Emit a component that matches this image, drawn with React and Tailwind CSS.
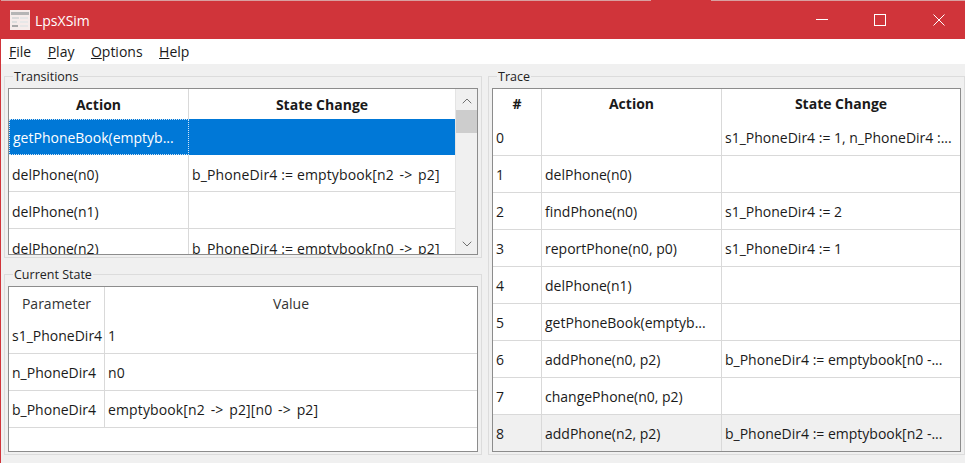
import { ChevronUp, ChevronDown } from "lucide-react";

const transitions = [
  ["getPhoneBook(emptyb...", ""],
  ["delPhone(n0)", "b_PhoneDir4 := emptybook[n2 -> p2]"],
  ["delPhone(n1)", ""],
  ["delPhone(n2)", "b_PhoneDir4 := emptybook[n0 -> p2]"],
];

const params = [
  ["s1_PhoneDir4", "1"],
  ["n_PhoneDir4", "n0"],
  ["b_PhoneDir4", "emptybook[n2 -> p2][n0 -> p2]"],
];

const trace = [
  ["0", "", "s1_PhoneDir4 := 1, n_PhoneDir4 :..."],
  ["1", "delPhone(n0)", ""],
  ["2", "findPhone(n0)", "s1_PhoneDir4 := 2"],
  ["3", "reportPhone(n0, p0)", "s1_PhoneDir4 := 1"],
  ["4", "delPhone(n1)", ""],
  ["5", "getPhoneBook(emptyb...", ""],
  ["6", "addPhone(n0, p2)", "b_PhoneDir4 := emptybook[n0 -..."],
  ["7", "changePhone(n0, p2)", ""],
  ["8", "addPhone(n2, p2)", "b_PhoneDir4 := emptybook[n2 -..."],
];

function AppIcon() {
  return (
    <svg width="20" height="20" viewBox="0 0 20 20" className="shrink-0">
      <rect width="20" height="20" fill="#f6ecea" />
      <rect x="1" y="2" width="18" height="3" fill="#b5b5b5" />
      <rect x="2" y="7" width="7" height="2" fill="#d9d9d9" />
      <rect x="10" y="7" width="8" height="2" fill="#e6e6e6" />
      <rect x="2" y="11" width="5" height="2" fill="#dddddd" />
      <rect x="10" y="11" width="8" height="2" fill="#e8e8e8" />
      <rect x="2" y="15" width="6" height="2" fill="#a8a8a8" />
      <rect x="10" y="15" width="8" height="2" fill="#e6e6e6" />
    </svg>
  );
}

function GroupBox({ title, className, children }) {
  return (
    <div className={`relative border border-[#dcdcdc] px-[3px] pt-[11px] pb-[2px] flex flex-col ${className}`}>
      <span className="absolute left-[8px] top-[-8px] bg-[#f0f0f0] px-[1px] text-[12.5px] leading-[15px] text-[#222]">
        {title}
      </span>
      {children}
    </div>
  );
}

// the arrow sits wider in the original font
function Value({ text }) {
  const parts = text.split(" -> ");
  return (
    <span className="tracking-[0.13px]">
      {parts.map((part, i) => (
        <span key={i}>
          {i > 0 && <span className="mx-[2px]"> -&gt; </span>}
          {part}
        </span>
      ))}
    </span>
  );
}

export default function App() {
  return (
    <div className="h-[463px] w-[965px] overflow-hidden bg-[#f0f0f0] text-[14px] text-[#1a1a1a] font-['Open_Sans','Noto_Sans',sans-serif] border-l border-[#d0343a]">
      {/* Title bar */}
      <div className="relative h-[39px] bg-[#d0343a] flex items-center text-white border-t border-[#d8a0a0]">
        <div className="absolute left-[650px] top-[-1px] h-[1px] w-[60px] bg-[#d0343a]" />
        <div className="ml-[9px]">
          <AppIcon />
        </div>
        <span className="ml-[5px] text-[14px]">LpsXSim</span>
        <div className="ml-auto flex items-center">
          <svg width="12" height="12" viewBox="0 0 12 12" className="mr-[46px]" stroke="white" fill="none">
            <path d="M0 5.5H12" />
          </svg>
          <svg width="12" height="12" viewBox="0 0 12 12" className="mr-[47px]" stroke="white" fill="none">
            <rect x="0.5" y="0.5" width="11" height="11" />
          </svg>
          <svg width="12" height="12" viewBox="0 0 12 12" className="mr-[20px]" stroke="white" fill="none">
            <path d="M0.5 0.5L11.5 11.5M11.5 0.5L0.5 11.5" />
          </svg>
        </div>
      </div>

      {/* Menu */}
      <div className="h-[25px] bg-white flex items-center pl-[8px] gap-[16.5px] text-[14px]">
        <span><u>F</u>ile</span>
        <span><u>P</u>lay</span>
        <span><u>O</u>ptions</span>
        <span><u>H</u>elp</span>
      </div>

      <div className="flex gap-[6px] pl-[3px] pt-[12px]">
        {/* Left column */}
        <div className="w-[478px] flex flex-col gap-[16px]">
          <GroupBox title="Transitions" className="h-[182px]">
            <div className="h-[168px] border border-[#8c8c8c] bg-white flex overflow-hidden">
              <div className="flex-1 overflow-hidden border-r border-[#e4e4e4]">
                <div className="flex h-[30px] font-bold text-center leading-[32px]">
                  <div className="w-[180px] border-r border-[#d9d9d9]">Action</div>
                  <div className="flex-1">State Change</div>
                </div>
                {transitions.map((row, i) => (
                  <div
                    key={row[0]}
                    className={`flex ${
                      i === 0 ? "h-[36px] bg-[#0078d7] text-white leading-[35px]" : "h-[37px] leading-[39px] border-b border-[#d9d9d9]"
                    }`}
                  >
                    <div className={`w-[180px] pl-[3px] whitespace-nowrap ${i === 0 ? "border border-dotted border-[#cfe4f7]" : "border-r border-[#d9d9d9]"}`}>
                      {row[0]}
                    </div>
                    <div className="flex-1 pl-[3px] whitespace-nowrap"><Value text={row[1]} /></div>
                  </div>
                ))}
              </div>
              <div className="w-[21px] bg-[#f0f0f0] flex flex-col items-center text-[#555]">
                <div className="h-[21px] pt-[3px] flex items-center justify-center"><ChevronUp size={16} strokeWidth={1.25} /></div>
                <div className="h-[23px] w-full bg-[#cdcdcd]" />
                <div className="flex-1" />
                <div className="h-[21px] flex items-center justify-center"><ChevronDown size={16} strokeWidth={1.25} /></div>
              </div>
            </div>
          </GroupBox>

          <GroupBox title="Current State" className="h-[181px]">
            <div className="h-[167px] border border-[#8c8c8c] bg-white overflow-hidden">
              <div className="flex h-[30px] text-center text-[#333] leading-[34px]">
                <div className="w-[96px] border-r border-[#d9d9d9]">Parameter</div>
                <div className="flex-1">Value</div>
              </div>
              {params.map((row) => (
                <div key={row[0]} className="flex h-[37px] leading-[38px] border-b border-[#d9d9d9]">
                  <div className="w-[96px] pl-[3px] border-r border-[#d9d9d9] whitespace-nowrap">{row[0]}</div>
                  <div className="flex-1 pl-[3px] whitespace-nowrap"><Value text={row[1]} /></div>
                </div>
              ))}
            </div>
          </GroupBox>
        </div>

        {/* Right column */}
        <GroupBox title="Trace" className="w-[477px] h-[379px]">
          <div className="h-[365px] border border-[#8c8c8c] bg-white overflow-hidden">
            <div className="flex h-[31px] text-center font-bold leading-[30px]">
              <div className="w-[49px] border-r border-[#d9d9d9]">#</div>
              <div className="w-[180px] border-r border-[#d9d9d9]">Action</div>
              <div className="flex-1">State Change</div>
            </div>
            {trace.map((row, i) => (
              <div
                key={row[0]}
                className={`flex border-[#d9d9d9] ${i === 0 ? "h-[36px] leading-[35px]" : "h-[37px] leading-[37px]"} ${
                  i === 8 ? "bg-[#f0f0f0]" : "border-b"
                }`}
              >
                <div className="w-[49px] pl-[3px] border-r border-[#d9d9d9]">{row[0]}</div>
                <div className="w-[180px] pl-[3px] border-r border-[#d9d9d9] whitespace-nowrap">{row[1]}</div>
                <div className="flex-1 pl-[3px] whitespace-nowrap">{row[2]}</div>
              </div>
            ))}
          </div>
        </GroupBox>
      </div>
    </div>
  );
}
